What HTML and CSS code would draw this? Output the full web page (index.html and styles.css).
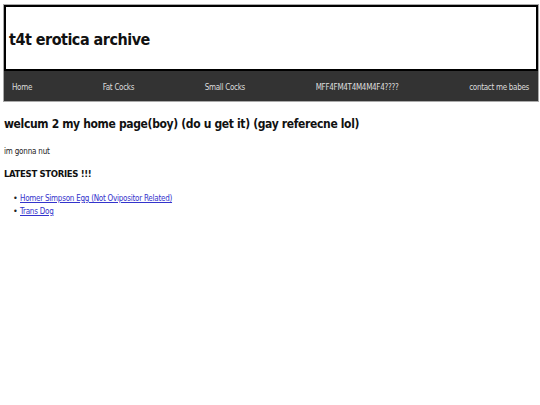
FILE: index.html
```html
<!DOCTYPE html>
<html lang="en">
<head>
  <meta charset="UTF-8">
  <title>t4t erotica archive</title>
  <meta name="viewport" content="width=device-width, initial-scale=1.0">
  <link rel="stylesheet" href="styles.css">
</head>
<body>
  <div class="top">
    <header class="banner">
      <h1>t4t erotica archive</h1>
    </header>
    <nav class="menu">
      <a href="#">Home</a>
      <a href="#">Fat Cocks</a>
      <a href="#">Small Cocks</a>
      <a href="#">MFF4FM4T4M4M4F4????</a>
      <a href="#">contact me babes</a>
    </nav>
  </div>
  <main class="content">
    <h2>welcum 2 my home page(boy) (do u get it) (gay referecne lol)</h2>
    <p>im gonna nut</p>
    <h3>LATEST STORIES !!!</h3>
    <ul class="stories">
      <li><a href="#">Homer Simpson Egg (Not Ovipositor Related)</a></li>
      <li><a href="#">Trans Dog</a></li>
    </ul>
  </main>
</body>
</html>
```

FILE: styles.css
```css
* { box-sizing: border-box; }
body { font-family: "DejaVu Sans", Verdana, sans-serif; font-stretch: condensed; margin: 4px 1px 4px 3px; background: #fff; color: #222; font-size: 8px; letter-spacing: -0.2px; }
.top { border: 1px solid #aaa; }
.banner { border: 2px solid #000; background: #fff; height: 66px; display: flex; align-items: center; padding: 2px 3px 0; }
h1 { margin: 0; font-size: 16px; font-weight: bold; letter-spacing: -0.5px; color: #111; }
.menu { background: #333; height: 30px; display: flex; align-items: center; justify-content: space-between; padding: 3px 9px 0 8px; }
.menu a { color: #ddd; text-decoration: none; font-size: 8px; letter-spacing: -0.3px; }
.content { padding: 0 1px; }
h2 { font-size: 12px; letter-spacing: -0.35px; margin: 15px 0 16px; color: #111; }
p { margin: 0 0 12px; }
h3 { font-size: 9.5px; letter-spacing: -0.35px; margin: 0 0 13px; color: #111; }
.stories { margin: 0; padding-left: 18px; list-style: none; }
.stories li { line-height: 12px; }
.stories li::before { content: "\2022"; display: inline-block; width: 7px; margin-left: -9px; font-size: 9px; }
.stories a { color: #3333cc; letter-spacing: -0.25px; }
```
